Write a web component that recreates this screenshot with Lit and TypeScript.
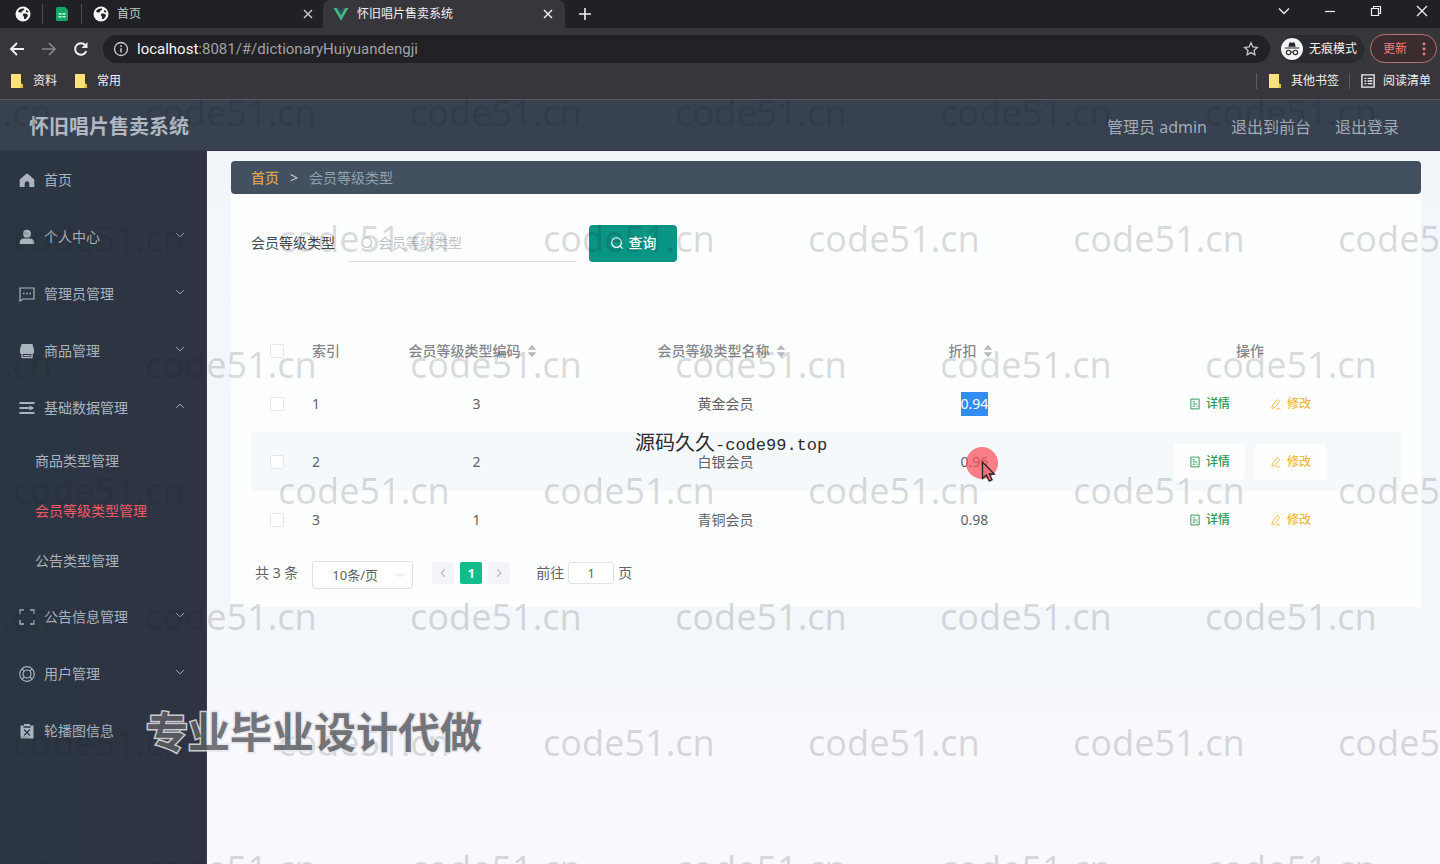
import { LitElement, html, css, svg } from "lit";
import { customElement, property, state } from "lit/decorators.js";
import { classMap } from "lit/directives/class-map.js";

const icons: Record<string, unknown> = {
  globe: svg`<circle cx="8" cy="8" r="7.5" fill="#f4f5f6"/><path d="M3 5.500C4 3 6.500 2 9 2.500c1 .8-.4 1.500-1.500 2.200-.8.600-.3 1.500-1.400 1.800C5 6.800 3.800 6.500 3 5.500zM8 8c1.500-.8 3-.6 4.500.2 1 .8-.2 3.300-2 4.800-1 .7-1.700-.4-1.500-1.500.2-1.300-1.800-2-1-3.500zM11 4l2.500 1.200-.6 1.300L11 6z" fill="#222326"/>`,
  sheet: svg`<path d="M2 2.500A1.500 1.500 0 0 1 3.500 1H11l3 3v9.500a1.500 1.500 0 0 1-1.500 1.500h-9A1.500 1.500 0 0 1 2 13.500z" fill="#13a666"/><path d="M4.500 7h3v1.800h-3zM8.500 7h3v1.800h-3zM4.500 10h3v1.500h-3zM8.500 10h3v1.500h-3z" fill="#c7f3dc"/>`,
  vue: svg`<path d="M.5 2H4l4 7 4-7h3.500L8 14.800z" fill="#41b883"/><path d="M4 2h2.500L8 4.600 9.500 2H12L8 9z" fill="#35495e"/>`,
  close: svg`<path d="M4 4l8 8M12 4l-8 8" fill="none" stroke="currentColor" stroke-width="1.500"/>`,
  plus: svg`<path d="M8 2v12M2 8h12" fill="none" stroke="currentColor" stroke-width="1.600"/>`,
  chevron: svg`<path d="M3 5.500l5 5 5-5" fill="none" stroke="currentColor" stroke-width="1.300"/>`,
  chevronUp: svg`<path d="M3 10.500l5-5 5 5" fill="none" stroke="currentColor" stroke-width="1.300"/>`,
  left: svg`<path d="M10.500 3l-5 5 5 5" fill="none" stroke="currentColor" stroke-width="1.500"/>`,
  right: svg`<path d="M5.500 3l5 5-5 5" fill="none" stroke="currentColor" stroke-width="1.500"/>`,
  minimise: svg`<path d="M3 8.500h10" stroke="currentColor" stroke-width="1.200"/>`,
  restore: svg`<path d="M3.500 5.500h7v7h-7zM5.500 5.500v-2h7v7h-2" fill="none" stroke="currentColor" stroke-width="1.200"/>`,
  shut: svg`<path d="M3 3l10 10M13 3L3 13" fill="none" stroke="currentColor" stroke-width="1.300"/>`,
  back: svg`<path d="M15 8H2M8 2L2 8l6 6" fill="none" stroke="currentColor" stroke-width="1.900"/>`,
  forward: svg`<path d="M1 8h13M8 2l6 6-6 6" fill="none" stroke="currentColor" stroke-width="1.700"/>`,
  reload: svg`<path d="M13.300 10.200A5.800 5.800 0 1 1 12.400 4.200" fill="none" stroke="currentColor" stroke-width="2"/><path d="M14.500 1v6h-6z" fill="currentColor"/>`,
  info: svg`<circle cx="8" cy="8" r="6.500" fill="none" stroke="currentColor" stroke-width="1.300"/><path d="M8 7.200v4.300M8 4.300v1.600" stroke="currentColor" stroke-width="1.500"/>`,
  star: svg`<path d="M8 1.800l1.900 4.100 4.400.5-3.300 3 .9 4.400L8 11.600l-3.900 2.200.9-4.400-3.300-3 4.400-.5z" fill="none" stroke="currentColor" stroke-width="1.300"/>`,
  incognito: svg`<circle cx="8" cy="8" r="8" fill="#f1f3f4"/><path d="M5.300 6.300L6 3.600c.1-.4.500-.5.900-.4l1.100.3 1.100-.3c.4-.1.800 0 .9.400l.7 2.700zM2.800 6.900h10.400v.8H2.800z" fill="#25262a"/><path d="M7.100 10.300q.9-.5 1.800 0" fill="none" stroke="#25262a" stroke-width=".8"/><circle cx="5.500" cy="10.500" r="1.600" fill="none" stroke="#25262a" stroke-width=".8"/><circle cx="10.500" cy="10.500" r="1.600" fill="none" stroke="#25262a" stroke-width=".8"/>`,
  dots: svg`<circle cx="8" cy="3" r="1.400" fill="currentColor"/><circle cx="8" cy="8" r="1.400" fill="currentColor"/><circle cx="8" cy="13" r="1.400" fill="currentColor"/>`,
  folder: svg`<path d="M2 1h10v9.500l2 1V15H2z" fill="#fbe17c"/><path d="M12 10.500l2 1V15h-2.800z" fill="#e7c04c"/>`,
  list: svg`<path d="M1 1h14v14H1z" fill="none" stroke="currentColor" stroke-width="1.600"/><path d="M4 5h2M7.500 5H13M4 8h2M7.500 8H13M4 11h2M7.500 11H13" stroke="currentColor" stroke-width="1.500"/>`,
  home: svg`<path d="M8 1.300L15.300 7.600V15H10.300v-3.500a2.300 2.300 0 0 0-4.600 0V15H.7V7.600z" fill="currentColor"/>`,
  user: svg`<circle cx="8" cy="4.700" r="3.900" fill="currentColor"/><path d="M.8 15v-1.500c0-2.500 2-4 4.200-4h6c2.200 0 4.200 1.500 4.200 4V15z" fill="currentColor"/>`,
  chat: svg`<path d="M1 2h14v11H4L1 15z" fill="none" stroke="currentColor" stroke-width="1.200"/><path d="M4 7.500h1.600M7.200 7.500h1.600M10.400 7.500H12" stroke="currentColor" stroke-width="1.600"/>`,
  shop: svg`<path d="M2.500 1h11L15 6.500v3a2 2 0 0 1-1.500 1.500h-11A2 2 0 0 1 1 9.500v-3z" fill="currentColor"/><path d="M3 11v3.500h10V11" fill="none" stroke="currentColor" stroke-width="1.300"/><path d="M4.500 12.500h7" stroke="currentColor" stroke-width="1"/>`,
  bars: svg`<path d="M.5 3h15M.5 8h10M.5 13h15" stroke="currentColor" stroke-width="1.800"/><path d="M10.500 5.500L15.500 8l-5 2.500z" fill="currentColor"/>`,
  frame: svg`<path d="M1 5V1h4M11 1h4v4M15 11v4h-4M5 15H1v-4" fill="none" stroke="currentColor" stroke-width="1.300"/>`,
  ring: svg`<circle cx="8" cy="8" r="7.300" fill="none" stroke="currentColor" stroke-width="1.200"/><circle cx="8" cy="8" r="4" fill="none" stroke="currentColor" stroke-width="1.200"/><path d="M2.800 2.800l2.400 2.400M13.200 2.800l-2.400 2.400M2.800 13.200l2.400-2.400M13.200 13.200l-2.400-2.400" stroke="currentColor" stroke-width="1.200"/>`,
  clip: svg`<path d="M1.500 2.500h3.500V1h6v1.500h3.500V15.500h-13z" fill="currentColor"/><path d="M5 6.500l6 6M11 6.500l-6 6M4.500 4h7" stroke="#2c3644" stroke-width="1.300"/>`,
  search: svg`<circle cx="7.500" cy="7.500" r="5.500" fill="none" stroke="currentColor" stroke-width="1.400"/><path d="M11.500 11.500l3 3" stroke="currentColor" stroke-width="1.400"/>`,
  doc: svg`<path d="M2.500 1.500h11v13h-11z" fill="none" stroke="currentColor" stroke-width="1.300"/><path d="M5 5h3M5 8h6M5 11h3M10 11h1.500" stroke="currentColor" stroke-width="1.300"/>`,
  pen: svg`<path d="M3 10.500L9.500 2l3.300 2.500-6.300 8.300L2.500 14zM8 14.500h6" fill="none" stroke="currentColor" stroke-width="1.200"/>`,
  sort: svg`<path d="M8 1l5 5.500H3zM8 15l5-5.500H3z" fill="currentColor"/>`,
};

@customElement("ui-icon")
class UiIcon extends LitElement {
  @property() name = "";
  static styles = css`
    :host { display: inline-block; flex: none; width: 16px; height: 16px; }
    svg { display: block; width: 100%; height: 100%; }
  `;
  render() {
    return html`<svg viewBox="0 0 16 16" aria-hidden="true">${icons[this.name]}</svg>`;
  }
}

@customElement("browser-bar")
class BrowserBar extends LitElement {
  static styles = css`
    :host { display: block; color: #f0f0f2; font-size: 12px; line-height: 16px; }
    button { font: inherit; color: inherit; background: none; border: 0; padding: 0; display: flex; align-items: center; }
    a { color: inherit; text-decoration: none; display: flex; align-items: center; gap: 8px; }
    .strip { display: flex; align-items: center; height: 28px; background: #202125; padding-left: 15px; }
    .pin { height: 20px; padding-right: 11px; margin-right: 11px; border-right: 1px solid #4a4b50; }
    .tab { display: flex; align-items: center; gap: 8px; height: 28px; box-sizing: border-box; padding-right: 7px; }
    .tab.first { width: 230px; color: #c6c7ca; }
    .tab.active { width: 242px; padding: 0 9px 0 10px; background: #37373b; border-radius: 8px 8px 0 0; }
    .tab .name { flex: 1; }
    .plus { margin-left: 12px; }
    .window { margin-left: auto; display: flex; gap: 30px; padding: 0 10px 6px 0; }
    .toolbar { display: flex; align-items: center; height: 41px; background: #37373b; padding: 0 3px 0 9px; }
    .nav { display: flex; gap: 16px; margin-right: 14px; }
    .dim { color: #85868a; }
    .omni { flex: 1; display: flex; align-items: center; gap: 8px; height: 28px; padding: 0 11px 0 10px; border-radius: 14px; background: #222125; }
    .omni ui-icon { color: #c8c9cc; }
    .url { flex: 1; min-width: 0; font: 15px/20px Roboto, sans-serif; color: #a1a1a5; }
    .url b { font-weight: 400; color: #f5f5f6; }
    .mode { display: flex; align-items: center; gap: 6px; margin: 0 6px 0 11px; height: 28px; padding-right: 7px; border-radius: 14px; background: #2b2a2e; }
    .mode ui-icon { width: 22px; height: 22px; }
    .update { height: 29px; box-sizing: border-box; padding: 0 4px 0 12px; gap: 9px; border: 1px solid #b8747a; border-radius: 15px; color: #ee7f7f; background: #3b2c30; }
    .marks { display: flex; align-items: center; height: 31px; background: #38363b; border-bottom: 1px solid #5a5c66; padding: 0 9px 6px; gap: 16px; box-sizing: border-box; }
    .marks a.more { margin-left: auto; padding-left: 10px; border-left: 1px solid #5d5c61; }
    .marks a.read { margin-left: -6px; padding-left: 11px; border-left: 1px solid #5d5c61; }
    .marks a.read ui-icon { width: 14px; height: 14px; }
  `;
  render() {
    return html`
      <div class="strip">
        <ui-icon name="globe"></ui-icon>
        <span class="pin"></span>
        <ui-icon name="sheet"></ui-icon>
        <span class="pin"></span>
        <div class="tab first">
          <ui-icon name="globe"></ui-icon><span class="name">首页</span>
          <button aria-label="关闭标签页"><ui-icon name="close"></ui-icon></button>
        </div>
        <div class="tab active">
          <ui-icon name="vue"></ui-icon><span class="name">怀旧唱片售卖系统</span>
          <button aria-label="关闭标签页"><ui-icon name="close"></ui-icon></button>
        </div>
        <button class="plus" aria-label="新标签页"><ui-icon name="plus"></ui-icon></button>
        <div class="window">
          <button aria-label="搜索标签页"><ui-icon name="chevron"></ui-icon></button>
          <button aria-label="最小化"><ui-icon name="minimise"></ui-icon></button>
          <button aria-label="还原"><ui-icon name="restore"></ui-icon></button>
          <button aria-label="关闭"><ui-icon name="shut"></ui-icon></button>
        </div>
      </div>
      <div class="toolbar">
        <div class="nav">
          <button aria-label="后退"><ui-icon name="back"></ui-icon></button>
          <button class="dim" aria-label="前进"><ui-icon name="forward"></ui-icon></button>
          <button aria-label="刷新"><ui-icon name="reload"></ui-icon></button>
        </div>
        <div class="omni">
          <ui-icon name="info"></ui-icon>
          <span class="url"><b>localhost</b>:8081/#/dictionaryHuiyuandengji</span>
          <button aria-label="收藏"><ui-icon name="star"></ui-icon></button>
        </div>
        <div class="mode"><ui-icon name="incognito"></ui-icon>无痕模式</div>
        <button class="update">更新<ui-icon name="dots"></ui-icon></button>
      </div>
      <div class="marks">
        <a href="#"><ui-icon name="folder"></ui-icon>资料</a>
        <a href="#"><ui-icon name="folder"></ui-icon>常用</a>
        <a href="#" class="more"><ui-icon name="folder"></ui-icon>其他书签</a>
        <a href="#" class="read"><ui-icon name="list"></ui-icon>阅读清单</a>
      </div>
    `;
  }
}

interface MenuItem { icon: string; label: string; arrow?: boolean; children?: string[]; }

const menu: MenuItem[] = [
  { icon: "home", label: "首页" },
  { icon: "user", label: "个人中心", arrow: true },
  { icon: "chat", label: "管理员管理", arrow: true },
  { icon: "shop", label: "商品管理", arrow: true },
  { icon: "bars", label: "基础数据管理", arrow: true, children: ["商品类型管理", "会员等级类型管理", "公告类型管理"] },
  { icon: "frame", label: "公告信息管理", arrow: true },
  { icon: "ring", label: "用户管理", arrow: true },
  { icon: "clip", label: "轮播图信息", arrow: true },
];

@customElement("side-menu")
class SideMenu extends LitElement {
  static styles = css`
    :host { display: block; flex: none; width: 206px; background: linear-gradient(90deg, #2b3642, #2f3342); border-right: 1px solid #3a3b4b; color: #aab3be; }
    a { color: inherit; text-decoration: none; display: flex; align-items: center; font-size: 14px; line-height: 20px; }
    .item { height: 57px; padding: 0 20px 0 19px; gap: 9px; }
    .label { flex: 1; }
    .arrow { width: 12px; height: 12px; margin-bottom: 4px; }
    .subs { padding-bottom: 2px; }
    .sub { height: 50px; padding-left: 35px; }
    .current { color: #ee5a66; }
  `;
  render() {
    return html`<nav>
      ${menu.map(
        (m) => html`
          <a class="item" href="#">
            <ui-icon name=${m.icon}></ui-icon><span class="label">${m.label}</span>
            ${m.arrow ? html`<ui-icon class="arrow" name=${m.children ? "chevronUp" : "chevron"}></ui-icon>` : ""}
          </a>
          ${m.children
            ? html`<div class="subs">
                ${m.children.map((c) => html`<a href="#" class=${classMap({ sub: true, current: c === "会员等级类型管理" })}>${c}</a>`)}
              </div>`
            : ""}
        `
      )}
    </nav>`;
  }
}

@customElement("level-page")
class LevelPage extends LitElement {
  @state() private rows = [
    { id: 1, code: "3", name: "黄金会员", rate: "0.94", marked: true },
    { id: 2, code: "2", name: "白银会员", rate: "0.96", pointed: true },
    { id: 3, code: "1", name: "青铜会员", rate: "0.98" },
  ];
  static styles = css`
    :host { display: block; flex: 1; min-width: 0; padding: 10px 19px 40px 24px; background: linear-gradient(#f2f6fb, #f4f7fb 75%, #f8f8fd 80%); color: #606266; font-size: 14px; line-height: 20px; }
    button, input, select { font: inherit; color: inherit; box-sizing: border-box; margin: 0; }
    .crumbs { display: flex; align-items: center; gap: 11px; height: 33px; padding: 0 20px; border-radius: 4px; background: #435060; color: #94a0ae; }
    .crumbs a { color: #d9a452; font-weight: 500; text-decoration: none; }
    .crumbs .sep { color: #c5ccd4; }
    .card { background: #fdfefe; padding: 30px 20px 18px; }
    .filter { display: flex; align-items: center; gap: 13px; color: #45484d; }
    .field { display: flex; align-items: center; gap: 4px; width: 228px; height: 38px; box-sizing: border-box; padding-left: 12px; border-bottom: 1px solid #dddfe3; color: #c0c4cc; }
    .field input { flex: 1; min-width: 0; border: 0; background: none; padding: 0; outline: 0; }
    .field input::placeholder { color: #c0c4cc; opacity: 1; }
    .field ui-icon { width: 14px; height: 14px; }
    .query { display: flex; align-items: center; justify-content: center; gap: 5px; width: 88px; height: 37px; padding: 0; border: 0; border-radius: 4px; background: #089584; color: #fff; font-weight: 500; }
    .query ui-icon { width: 14px; height: 14px; }
    table { width: 100%; margin-top: 65px; border-collapse: collapse; table-layout: fixed; }
    .c-check { width: 51px; }
    .c-index { width: 50px; }
    .c-data { width: 21.65%; }
    th { height: 48px; padding: 0; font-weight: 500; color: #84878d; }
    td { height: 57px; padding: 0; text-align: center; border-bottom: 1px solid #f8f9fc; }
    td.index, th.index { text-align: left; padding-left: 10px; }
    .even td { background: #f6f9fc; }
    .head { display: inline-flex; align-items: center; }
    .head ui-icon { width: 24px; height: 14px; color: #b5b8bf; }
    input[type="checkbox"] { appearance: none; display: block; width: 14px; height: 14px; margin: 0 auto; border: 1px solid #e4e7ed; border-radius: 2px; background: #fff; }
    .marked { display: inline-block; line-height: 24px; background: #338cf3; color: #fff; }
    .pointed { position: relative; }
    .pointer { position: absolute; left: 5px; top: -6px; width: 34px; height: 38px; }
    .acts { display: flex; justify-content: center; gap: 10px; }
    .act { display: flex; align-items: center; gap: 5px; height: 36px; padding: 0 15px; border: 0; border-radius: 3px; background: #fefefe; font-size: 12px; font-weight: 500; }
    .act ui-icon { width: 12px; height: 12px; }
    .detail { color: #2f9a55; }
    .edit { color: #f3b63c; }
    .pager { display: flex; align-items: center; margin-top: 8px; padding-left: 4px; height: 32px; }
    .size { position: relative; display: flex; align-items: center; margin: 4px 19px 0 14px; color: #c0c4cc; }
    .size select { appearance: none; width: 101px; height: 28px; padding: 0 0 0 19px; border: 1px solid #dcdfe6; border-radius: 3px; background: #fff; color: #606266; font-size: 13px; }
    .size ui-icon { position: absolute; right: 8px; width: 10px; height: 10px; }
    .step { display: flex; align-items: center; justify-content: center; width: 22px; height: 22px; padding: 0; margin-right: 6px; border: 0; border-radius: 2px; background: #f4f5f8; color: #b4b8c0; font-size: 13px; }
    .step ui-icon { width: 12px; height: 12px; }
    .step.on { background: #12bd8b; color: #fff; font-weight: 700; }
    .jump { display: flex; align-items: center; gap: 4px; margin-left: 20px; }
    .jump input { width: 46px; height: 22px; padding: 0; text-align: center; border: 1px solid #e0e3e9; border-radius: 3px; background: #fff; font-size: 13px; }
  `;
  private head(label: string) {
    return html`<span class="head">${label}<ui-icon name="sort"></ui-icon></span>`;
  }
  render() {
    return html`
      <nav class="crumbs"><a href="#">首页</a><span class="sep">&gt;</span><span>会员等级类型</span></nav>
      <section class="card">
        <form class="filter">
          <label for="level">会员等级类型</label>
          <span class="field"><ui-icon name="search"></ui-icon><input id="level" type="text" placeholder="会员等级类型" /></span>
          <button class="query" type="button"><ui-icon name="search"></ui-icon>查询</button>
        </form>
        <table>
          <colgroup>
            <col class="c-check" /><col class="c-index" /><col class="c-data" /><col class="c-data" /><col class="c-data" /><col />
          </colgroup>
          <thead>
            <tr>
              <th><input type="checkbox" aria-label="全选" /></th>
              <th class="index">索引</th>
              <th>${this.head("会员等级类型编码")}</th>
              <th>${this.head("会员等级类型名称")}</th>
              <th>${this.head("折扣")}</th>
              <th>操作</th>
            </tr>
          </thead>
          <tbody>
            ${this.rows.map(
              (r) => html`<tr class=${classMap({ even: r.id % 2 === 0 })}>
                <td><input type="checkbox" aria-label=${r.name} /></td>
                <td class="index">${r.id}</td>
                <td>${r.code}</td>
                <td>${r.name}</td>
                <td>
                  <span class=${classMap({ marked: !!r.marked, pointed: !!r.pointed })}>${r.rate}${r.pointed
                    ? html`<svg class="pointer" viewBox="0 0 34 38" aria-hidden="true">
                        <circle cx="16" cy="17" r="16" fill="#fb4d57" fill-opacity=".72" />
                        <path d="M16.500 16v16.500l3.800-3.400 3 6 2.800-1.300-2.800-5.800h5z" fill="#f47079" stroke="#222" stroke-width="1.300" />
                      </svg>`
                    : ""}</span>
                </td>
                <td>
                  <div class="acts">
                    <button class="act detail"><ui-icon name="doc"></ui-icon>详情</button>
                    <button class="act edit"><ui-icon name="pen"></ui-icon>修改</button>
                  </div>
                </td>
              </tr>`
            )}
          </tbody>
        </table>
        <div class="pager">
          <span>共 3 条</span>
          <span class="size">
            <select aria-label="每页条数"><option>10条/页</option></select>
            <ui-icon name="chevron"></ui-icon>
          </span>
          <button class="step" aria-label="上一页"><ui-icon name="left"></ui-icon></button>
          <button class="step on">1</button>
          <button class="step" aria-label="下一页"><ui-icon name="right"></ui-icon></button>
          <label class="jump">前往<input type="text" value="1" />页</label>
        </div>
      </section>
    `;
  }
}

@customElement("app-root")
class AppRoot extends LitElement {
  static styles = css`
    :host { display: flex; flex-direction: column; min-height: 100vh; position: relative; overflow: hidden; font-family: "Noto Sans", "Noto Sans CJK SC", sans-serif; }
    .top { display: flex; align-items: center; gap: 24px; height: 51px; padding: 4px 41px 0 29px; background: #37414f; color: #a3acb8; border-bottom: 1px solid #34364a; box-sizing: border-box; font-size: 16px; line-height: 24px; }
    h1 { margin: 0 auto 0 0; font-size: 20px; line-height: 28px; font-weight: 700; color: #b0b8c2; }
    .top a { color: inherit; text-decoration: none; }
    .body { flex: 1; display: flex; }
    .marks { position: absolute; inset: 0; overflow: hidden; pointer-events: none; padding-top: 50px; color: rgba(28, 28, 36, 0.16); font-size: 36px; line-height: 126px; }
    .line { display: flex; height: 126px; margin-left: -120px; }
    .line:nth-child(even) { margin-left: 13px; }
    .line span { flex: none; width: 265px; }
    .site { position: absolute; left: 635px; top: 430px; color: #2b2d31; font: 17px/24px "Liberation Mono", monospace; pointer-events: none; white-space: nowrap; }
    .site span { font: 20px/24px "Noto Sans CJK SC", sans-serif; }
    .promo { position: absolute; left: 146px; top: 701px; font-size: 42px; line-height: 62px; font-weight: 700; color: #5e5f64; -webkit-text-stroke: 3px #e4e5e8; paint-order: stroke fill; opacity: 0.85; white-space: nowrap; pointer-events: none; }
  `;
  render() {
    return html`
      <browser-bar></browser-bar>
      <header class="top">
        <h1>怀旧唱片售卖系统</h1>
        <span>管理员 admin</span>
        <a href="#">退出到前台</a>
        <a href="#">退出登录</a>
      </header>
      <div class="body"><side-menu></side-menu><level-page></level-page></div>
      <div class="marks" aria-hidden="true">
        ${Array.from({ length: 7 }, () => html`<div class="line">${Array.from({ length: 6 }, () => html`<span>code51.cn</span>`)}</div>`)}
      </div>
      <div class="promo">专业毕业设计代做</div>
      <div class="site"><span>源码久久</span>-code99.top</div>
    `;
  }
}
